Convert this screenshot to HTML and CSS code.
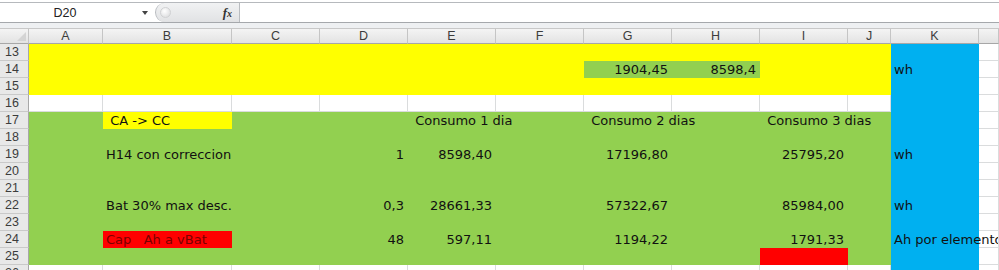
FILE: index.html
```html
<!DOCTYPE html>
<html lang="es">
<head>
  <meta charset="UTF-8">
  <meta name="viewport" content="width=device-width, initial-scale=1.0">
  <title>Consumo baterias</title>
  <link rel="stylesheet" href="styles.css">
</head>
<body>
  <div class="formula-bar">
    <div class="name-box">
      <span class="name">D20</span>
      <span class="arrow"></span>
    </div>
    <div class="fx-zone">
      <span class="grip"></span>
      <span class="fx">f<small>x</small></span>
    </div>
    <div class="formula-input"></div>
  </div>
  <div class="bar-gap"></div>

  <div class="sheet">
    <!-- column headers -->
    <div class="corner"><span class="tri"></span></div>
    <div class="col-head">A</div>
    <div class="col-head">B</div>
    <div class="col-head">C</div>
    <div class="col-head">D</div>
    <div class="col-head">E</div>
    <div class="col-head">F</div>
    <div class="col-head">G</div>
    <div class="col-head">H</div>
    <div class="col-head">I</div>
    <div class="col-head">J</div>
    <div class="col-head">K</div>
    <div class="col-head"></div>

    <!-- 13 -->
    <div class="row-head">13</div>
    <div class="cell yellow span-10"></div>
    <div class="cell blue"></div>
    <div class="cell"></div>

    <!-- 14 -->
    <div class="row-head">14</div>
    <div class="cell yellow span-6"></div>
    <div class="cell green num">1904,45</div>
    <div class="cell green num">8598,4</div>
    <div class="cell yellow span-2"></div>
    <div class="cell blue">wh</div>
    <div class="cell"></div>

    <!-- 15 -->
    <div class="row-head">15</div>
    <div class="cell yellow span-10"></div>
    <div class="cell blue"></div>
    <div class="cell"></div>

    <!-- 16 -->
    <div class="row-head">16</div>
    <div class="cell"></div>
    <div class="cell"></div>
    <div class="cell"></div>
    <div class="cell"></div>
    <div class="cell"></div>
    <div class="cell"></div>
    <div class="cell"></div>
    <div class="cell"></div>
    <div class="cell"></div>
    <div class="cell"></div>
    <div class="cell blue"></div>
    <div class="cell"></div>

    <!-- 17 -->
    <div class="row-head">17</div>
    <div class="cell green"></div>
    <div class="cell yellow"> CA -&gt; CC</div>
    <div class="cell green"></div>
    <div class="cell green"></div>
    <div class="cell green span-2"> Consumo 1 dia</div>
    <div class="cell green span-2"> Consumo 2 dias</div>
    <div class="cell green span-2"> Consumo 3 dias</div>
    <div class="cell blue"></div>
    <div class="cell"></div>

    <!-- 18 -->
    <div class="row-head">18</div>
    <div class="cell green span-10"></div>
    <div class="cell blue"></div>
    <div class="cell"></div>

    <!-- 19 -->
    <div class="row-head">19</div>
    <div class="cell green"></div>
    <div class="cell green span-2">H14 con correccion</div>
    <div class="cell green num">1</div>
    <div class="cell green num">8598,40</div>
    <div class="cell green"></div>
    <div class="cell green num">17196,80</div>
    <div class="cell green"></div>
    <div class="cell green num">25795,20</div>
    <div class="cell green"></div>
    <div class="cell blue">wh</div>
    <div class="cell"></div>

    <!-- 20 -->
    <div class="row-head">20</div>
    <div class="cell green span-10"></div>
    <div class="cell blue"></div>
    <div class="cell"></div>

    <!-- 21 -->
    <div class="row-head">21</div>
    <div class="cell green span-10"></div>
    <div class="cell blue"></div>
    <div class="cell"></div>

    <!-- 22 -->
    <div class="row-head">22</div>
    <div class="cell green"></div>
    <div class="cell green span-2">Bat 30% max desc.</div>
    <div class="cell green num">0,3</div>
    <div class="cell green num">28661,33</div>
    <div class="cell green"></div>
    <div class="cell green num">57322,67</div>
    <div class="cell green"></div>
    <div class="cell green num">85984,00</div>
    <div class="cell green"></div>
    <div class="cell blue">wh</div>
    <div class="cell"></div>

    <!-- 23 -->
    <div class="row-head">23</div>
    <div class="cell green span-10"></div>
    <div class="cell blue"></div>
    <div class="cell"></div>

    <!-- 24 -->
    <div class="row-head">24</div>
    <div class="cell green"></div>
    <div class="cell red">Cap   Ah a vBat</div>
    <div class="cell green"></div>
    <div class="cell green num">48</div>
    <div class="cell green num">597,11</div>
    <div class="cell green"></div>
    <div class="cell green num">1194,22</div>
    <div class="cell green"></div>
    <div class="cell green num">1791,33</div>
    <div class="cell green"></div>
    <div class="cell blue">Ah por elemento</div>
    <div class="cell"></div>

    <!-- 25 -->
    <div class="row-head">25</div>
    <div class="cell green span-8"></div>
    <div class="cell red"></div>
    <div class="cell green"></div>
    <div class="cell blue"></div>
    <div class="cell"></div>

    <!-- 26 -->
    <div class="row-head">26</div>
    <div class="cell"></div>
    <div class="cell"></div>
    <div class="cell"></div>
    <div class="cell"></div>
    <div class="cell"></div>
    <div class="cell"></div>
    <div class="cell"></div>
    <div class="cell"></div>
    <div class="cell"></div>
    <div class="cell"></div>
    <div class="cell blue"></div>
    <div class="cell"></div>
  </div>
</body>
</html>
```

FILE: styles.css
```css
body {
  margin: 0;
  background: #fff;
  font-family: "DejaVu Sans", Verdana, sans-serif;
  overflow: hidden;
}

/* formula bar */
.formula-bar {
  display: flex;
  margin-top: 2px;
  height: 19px;
  border-top: 1px solid #b6b9bd;
  border-bottom: 1px solid #a5a8ac;
  background: #fff;
}

.name-box {
  display: flex;
  align-items: center;
  width: 155px;
  font-family: "Liberation Sans", Arial, sans-serif;
  font-size: 12.5px;
  color: #222;
}

.name-box .name {
  width: 130px;
  text-align: center;
}

.name-box .arrow {
  width: 0;
  height: 0;
  margin-left: 12px;
  border-left: 3px solid transparent;
  border-right: 3px solid transparent;
  border-top: 4px solid #444;
}

.fx-zone {
  display: flex;
  align-items: center;
  justify-content: space-between;
  width: 85px;
  box-sizing: border-box;
  padding: 0 7px 0 4px;
  border-radius: 10px 0 0 10px;
  border-left: 1px solid #b9bcc0;
  border-right: 1px solid #b9bcc0;
  background: linear-gradient(#f1f2f3, #e1e2e4);
}

.grip {
  width: 9px;
  height: 9px;
  border-radius: 50%;
  background: radial-gradient(circle at 40% 35%, #ffffff, #d6d7d9);
  border: 1px solid #d0d1d3;
}

.fx {
  font-family: "Liberation Serif", "Times New Roman", serif;
  font-style: italic;
  font-weight: bold;
  font-size: 13px;
  color: #333;
}

.fx small {
  font-size: 10px;
}

.formula-input {
  flex: 1;
  background: #fff;
}

.bar-gap {
  height: 5px;
  background: #eef0f2;
}

/* grid */
.sheet {
  display: grid;
  grid-template-columns: 29px 74px 129px 88px 88px 88px 88px 88px 88px 88px 43px 88px 1fr;
  grid-template-rows: 16px;
  grid-auto-rows: 17px;
  font-size: 13px;
  color: #111;
}

.corner,
.col-head,
.row-head {
  box-sizing: border-box;
  background: linear-gradient(#f4f4f4, #e3e3e3);
  border-right: 1px solid #c5c5c5;
  border-bottom: 1px solid #a7a7a7;
  font-family: "Liberation Sans", Arial, sans-serif;
  font-size: 12.5px;
  color: #3c3c3c;
}

.corner {
  position: relative;
  border-top: 1px solid #c8c8c8;
}

.corner .tri {
  position: absolute;
  right: 2px;
  bottom: 2px;
  width: 0;
  height: 0;
  border-left: 9px solid transparent;
  border-bottom: 9px solid #d4d4d4;
}

.col-head {
  border-top: 1px solid #c8c8c8;
  text-align: center;
  line-height: 15px;
}

.row-head {
  background: #e8e8e8;
  border-bottom: 1px solid #c9c9c9;
  border-right: 1px solid #a7a7a7;
  text-align: center;
  padding-right: 4px;
  line-height: 17px;
}

.cell {
  box-sizing: border-box;
  border-right: 1px solid #dadcdd;
  border-bottom: 1px solid #dadcdd;
  padding: 0 3px;
  line-height: 18px;
  white-space: pre;
  overflow: visible;
}

.num {
  text-align: right;
}

.span-2 { grid-column: span 2; }
.span-6 { grid-column: span 6; }
.span-8 { grid-column: span 8; }
.span-10 { grid-column: span 10; }

.yellow {
  background: #ffff00;
  border-color: #ffff00;
}

.green {
  background: #92d050;
  border-color: #92d050;
}

.blue {
  background: #00b0f0;
  border-color: #00b0f0;
}

.red {
  background: #ff0000;
  border-color: #ff0000;
  color: #7a0000;
}
```
